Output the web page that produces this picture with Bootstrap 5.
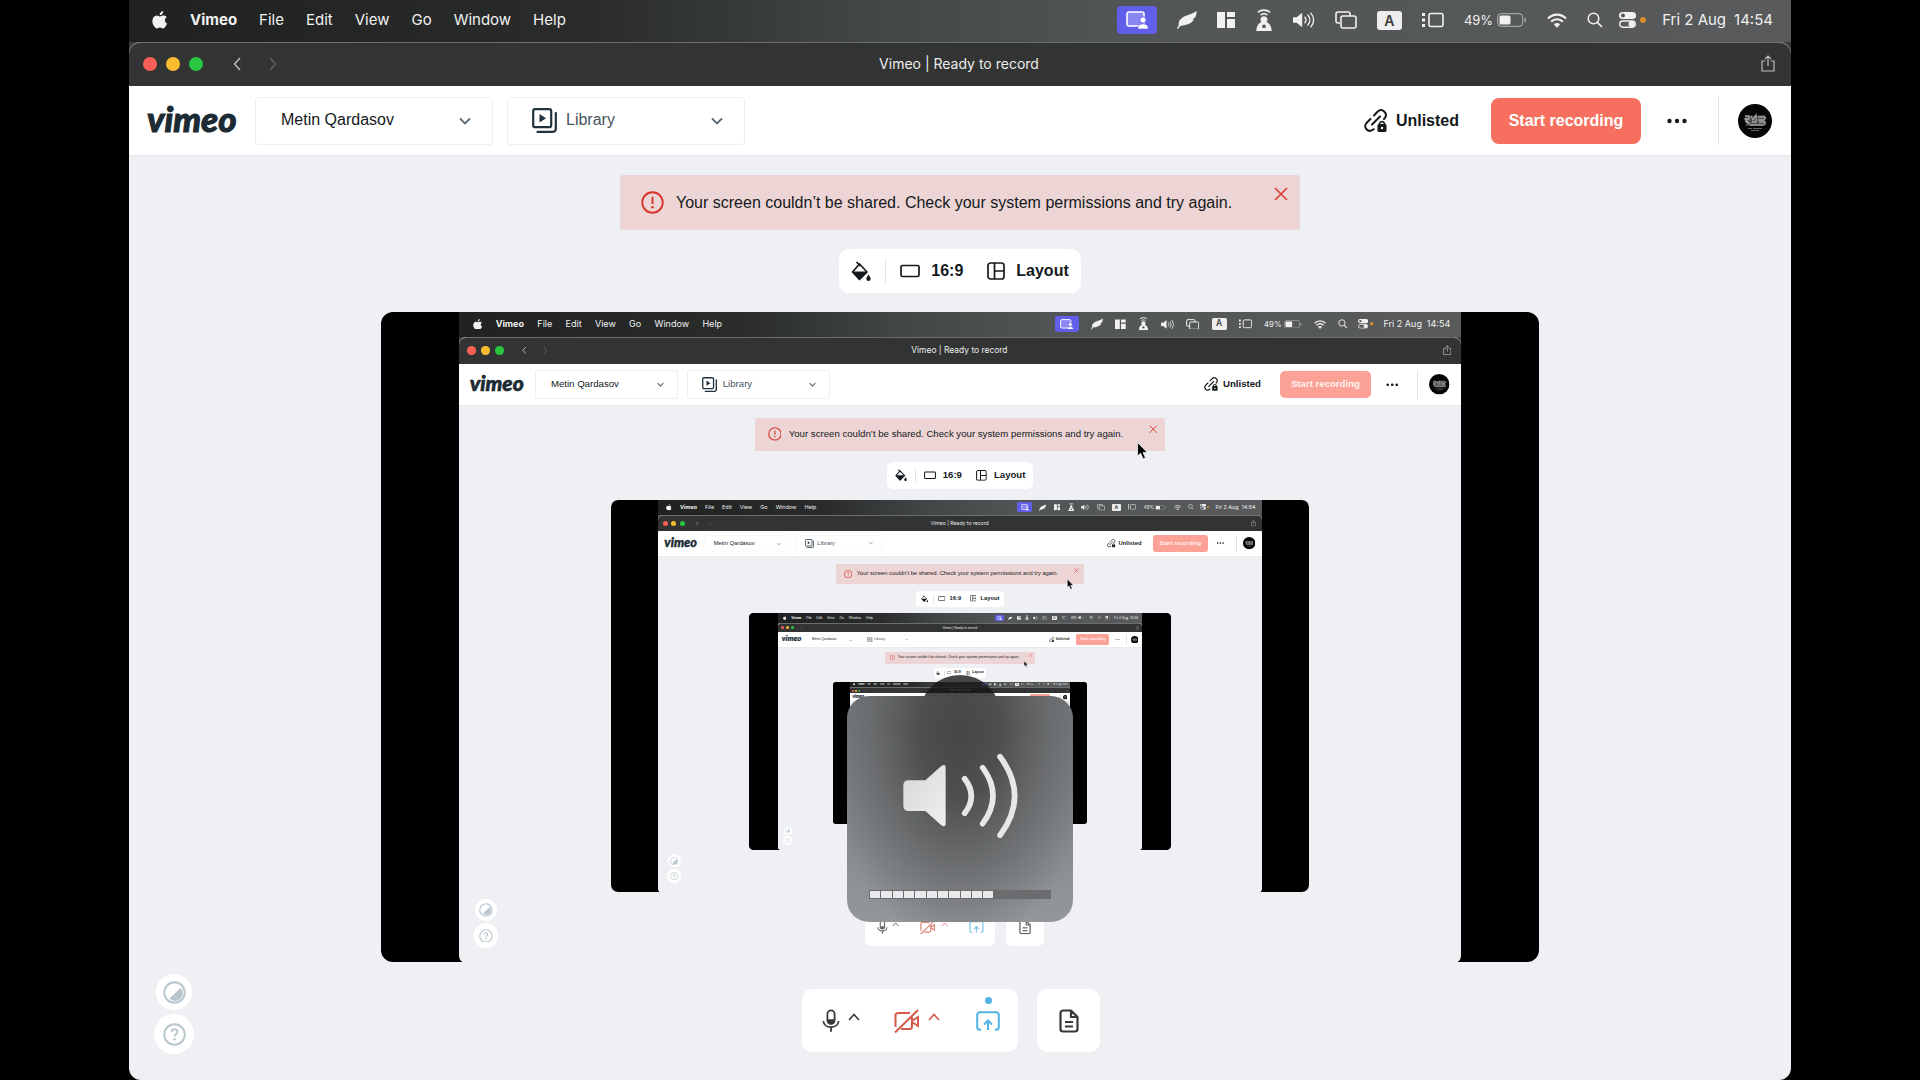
<!DOCTYPE html>
<html lang="en">
<head>
<meta charset="utf-8">
<meta name="viewport" content="width=device-width, initial-scale=1">
<title>Vimeo | Ready to record</title>
<link href="https://cdn.jsdelivr.net/npm/bootstrap@5.3.0/dist/css/bootstrap.min.css" rel="stylesheet">
<style>
  body { background: #000; font-family: "Liberation Sans", Arial, sans-serif; font-size: 16px; color: #14191c; overflow-x: hidden; }
  svg { display: block; flex: none; }
  .desk { position: relative; margin: 0 129px; min-height: 100vh; background: #000; }
  .mac-font { font-family: Inter, sans-serif; font-size: 15px; line-height: 20px; }

  .menubar { height: 42px; padding: 0 18px 2px 23px; color: #f1f1f1; background: linear-gradient(90deg, #202222, #2a2c2c 28%, #434646 44%, #525556 60%, #585a5b); }
  .menubar a { color: inherit; text-decoration: none; }
  .menu-list { gap: 22px; }
  .tray { gap: 20px; }
  .tray-end { gap: 16px; }
  .cast { width: 40px; height: 28px; border-radius: 4px; background: #615eea; }
  .lang-key { width: 25px; height: 19px; border-radius: 3px; background: #eee; color: #3c3e3e; font-size: 14px; line-height: 19px; font-weight: 600; }
  .charge { font-size: 13px; }

  .win { border-radius: 12px; overflow: hidden; background: #eff0f4; }
  .under-win { background: linear-gradient(#3b3d3d 50%, #000 50%); }
  .titlebar { height: 44px; padding: 0 16px 2px 14px; font-size: 14px; background: #323433; color: #ececec; border-top: 1px solid #6c6e6d; border-radius: 12px 12px 0 0; }
  .side { flex: 1 1 0; }
  .lights { gap: 9px; margin-right: 30px; }
  .light { width: 14px; height: 14px; border-radius: 50%; }
  .bare { border: 0; background: none; padding: 0; color: inherit; }

  .topbar { height: 70px; padding: 0 19px 0 18px; background: #fff; border-bottom: 1px solid #e8eaee; }
  .wordmark { font: italic 900 35px/40px Lato, sans-serif; -webkit-text-stroke: 1px #1b2a33; color: #1b2a33; text-decoration: none; width: 92px; padding-bottom: 6px; }
  .pickers { gap: 14px; }
  .picker { width: 238px; height: 48px; border: 1px solid #eeeff1; border-radius: 3px; }
  .desk .desk .desk .picker { border-color: #fafafb; }
  .picker select { width: 100%; height: 46px; padding: 0 38px 2px 25px; border: 0; border-radius: 3px; background-color: transparent; font-size: 16px; color: #14191c;
    background-image: url("data:image/svg+xml,%3Csvg xmlns='http://www.w3.org/2000/svg' viewBox='0 0 12 12'%3E%3Cpath d='M1 3.5l5 5 5-5' fill='none' stroke='%235a6b76' stroke-width='1.8'/%3E%3C/svg%3E");
    background-position: right 21px center; background-size: 12px 12px; }
  .picker svg + select { padding-left: 8px; color: #45545e; }
  .btn-rec { width: 150px; height: 46px; padding: 0; border-radius: 8px; font-size: 16px; font-weight: 700; color: #fff; background: #f76f5f; border: 0; }
  .btn-rec:hover { background: #e9604f; color: #fff; }
  .btn-rec:disabled { background: #fca195; color: #fff2ef; opacity: 1; }
  .rule-v { width: 1px; background: #e2e6e9; }
  .topbar .rule-v { height: 48px; margin: 0 19px 0 29px; }
  .face { width: 34px; height: 34px; }

  .work { position: relative; padding: 19px 0 28px; }
  .notice { width: 680px; height: 55px; margin: 0; padding: 0 12px 0 21px; border: 0; border-radius: 3px; background: #edd5d5; color: #14191c; }
  .notice .bare { color: #dd3a32; margin-top: 12px; }
  .notice span { margin-left: 12px; }
  .framebar { height: 44px; margin: 19px 0; padding: 0 12px; border-radius: 10px; background: #fff; font-weight: 700; }
  .framebar .rule-v { height: 26px; margin: 0 14px; }
  .framebar .bare { gap: 11px; }
  .feed { position: relative; width: 1158px; max-width: 100%; height: 650px; border-radius: 12px; background: #000; overflow: hidden; }
  .feed > .desk { zoom: .603; width: 1662px; height: 1080px; min-height: 0; margin: 0 auto; flex: none; }
  .desk .desk .dock svg { opacity: .75; }
  .dock { margin-top: 27px; gap: 19px; padding-right: 18px; }
  .dock-box { height: 63px; border-radius: 10px; background: #fff; color: #35393c; }
  .dock-main { width: 216px; }
  .dock-doc { width: 63px; }
  .ready { left: 50%; top: -14px; width: 7px; height: 7px; margin-left: -3px; border-radius: 50%; background: #54b4e4; }
  .off { color: #d35a4c; }
  .live { color: #54b4e4; }

  .helpers { position: absolute; left: 25px; bottom: 26px; gap: 4px; color: #b8c6cd; }
  .helpers button { width: 36px; height: 36px; border-radius: 50%; background: #fff; }
  .helpers button + button { width: 40px; height: 40px; }

  .pointer { position: absolute; left: 1124px; top: 216px; }
  .count { position: absolute; left: 50%; bottom: 205px; width: 82px; height: 82px; margin-left: -41px; border-radius: 50%; background: rgba(20, 21, 21, .78); }
  .osd { position: absolute; left: 50%; bottom: 40px; width: 226px; height: 226px; margin-left: -113px; padding: 54px 22px 23px; border-radius: 22px;
    background: radial-gradient(ellipse 60% 95% at 50% 16%, #454746 0, #4e5050 30%, rgba(100,102,104,.75) 65%, rgba(140,142,144,0) 100%), linear-gradient(#75787a, #94979a); }
  .level { height: 9px; padding: 1px; gap: 1px; background: #6a6c6d; }
  .level i { flex: 1 1 0; }
  .level .on { background: #e9eaeb; }
</style>
</head>
<body>

<svg width="0" height="0" class="position-absolute" aria-hidden="true">
  <defs>
    <linearGradient id="shine" x1="0" y1="0" x2="1" y2="1"><stop offset="0" stop-color="#d6d7d8"/><stop offset="1" stop-color="#eeeff0"/></linearGradient>
    <symbol id="apple" viewBox="0 0 16 18"><path fill="currentColor" d="M11.200 0c.1 1.100-.3 2.100-.9 2.900-.7.800-1.600 1.300-2.600 1.200-.1-1 .4-2.100 1-2.700C9.300.6 10.400.1 11.200 0zM14.800 6.200c-1.200.7-1.900 1.700-1.900 3 0 1.500.9 2.700 2.200 3.200-.3.900-.7 1.800-1.300 2.600-.8 1.200-1.600 2.400-2.900 2.400-1.200 0-1.600-.8-3-.8s-1.900.8-3 .8c-1.300 0-2.200-1.300-3-2.400C.3 12.700-.2 9.300 1.200 6.900c.8-1.400 2.100-2.300 3.500-2.300 1.300 0 2.200.8 3.200.8s1.900-.9 3.500-.8c1.400 0 2.600.6 3.400 1.600z"/></symbol>
    <symbol id="cast" viewBox="0 0 22 18"><rect x="1" y="1" width="17" height="14" rx="2" fill="#8a87f3" stroke="#fff" stroke-width="1.6"/><circle cx="17" cy="9" r="3.200" fill="#fff" stroke="#615eea"/><path d="M12 18v-1.500c0-2.500 2.200-3.600 5-3.600s5 1.100 5 3.600V18z" fill="#fff" stroke="#615eea" stroke-width=".6"/></symbol>
    <symbol id="quill" viewBox="0 0 22 20"><path fill="currentColor" d="M21.500 0c.3 4.500-1 7.500-4.200 9.300l1.200.6C16 13 12.500 15 7.800 15.800L3.500 16.500 1.200 20 0 19l2-3.400C1 11 4.500 7.800 9 5.600 13 3.700 17.500 3 21.500 0z"/></symbol>
    <symbol id="tiles" viewBox="0 0 18 18"><path fill="currentColor" d="M0 1h8v16H0zM10 1h8v5h-8zM10 8h8v9h-8z"/></symbol>
    <symbol id="beacon" viewBox="0 0 16 20"><g fill="none" stroke="currentColor" stroke-width="1.500"><path d="M2.500 3C5.500.3 10.500.3 13.500 3M5 5.500c1.800-1.500 4.200-1.500 6 0"/></g><path fill="currentColor" fill-rule="evenodd" d="M8 6.500c2 0 3.200 1.400 3.200 3 0 .9-.4 1.700-1 2.300 2.700.9 4.600 3.700 4.800 8.200H1c.2-4.500 2.100-7.300 4.800-8.200-.6-.6-1-1.400-1-2.300 0-1.600 1.200-3 3.200-3zM8 14a1.700 1.700 0 1 0 0 3.400A1.700 1.700 0 0 0 8 14z"/></symbol>
    <symbol id="sound" viewBox="0 0 24 18"><path fill="currentColor" d="M0 6h4l6-5v16l-6-5H0z"/><path d="M13 6c1.500 1.800 1.500 4.200 0 6M16.200 3.600c2.800 3.200 2.800 7.600 0 10.800M19.500 1.500c4 4.500 4 10.500 0 15" fill="none" stroke="currentColor" stroke-width="1.500" stroke-linecap="round"/></symbol>
    <symbol id="stack" viewBox="0 0 22 18"><g fill="none" stroke="currentColor" stroke-width="1.600"><path d="M5 12H3a2 2 0 0 1-2-2V3a2 2 0 0 1 2-2h10a2 2 0 0 1 2 2v2"/><rect x="6" y="5" width="15" height="12" rx="2"/></g></symbol>
    <symbol id="stage" viewBox="0 0 22 16"><rect x="7" y="1.500" width="14" height="13" rx="2" fill="none" stroke="currentColor" stroke-width="1.600"/><path fill="currentColor" d="M0 1h3v3H0zM0 6.500h3v3H0zM0 12h3v3H0z"/></symbol>
    <symbol id="battery" viewBox="0 0 30 14"><rect x=".7" y=".7" width="25" height="12.600" rx="3.500" fill="none" stroke="currentColor" opacity=".6"/><rect x="2.500" y="2.500" width="11" height="9" rx="1.500" fill="currentColor"/><path d="M27.500 4.500c2 .8 2 4.200 0 5z" fill="currentColor" opacity=".6"/></symbol>
    <symbol id="wifi" viewBox="0 0 20 15"><g fill="none" stroke="currentColor" stroke-width="2.200"><path d="M1 5.500c5-5.300 13-5.300 18 0M4.200 8.800c3.300-3.400 8.300-3.400 11.600 0"/></g><path fill="currentColor" d="M6.800 11.300c1.900-1.700 4.500-1.700 6.400 0L10 14.800z"/></symbol>
    <symbol id="lens" viewBox="0 0 16 16"><circle cx="6.500" cy="6.500" r="5.300" fill="none" stroke="currentColor" stroke-width="1.500"/><path d="M10.500 10.500L15 15" stroke="currentColor" stroke-width="1.700"/></symbol>
    <symbol id="center" viewBox="0 0 17 16"><rect width="17" height="7" rx="3.500" fill="currentColor"/><circle cx="4" cy="3.500" r="2" fill="#555"/><rect x=".7" y="9" width="15.600" height="6.200" rx="3.100" fill="none" stroke="currentColor" stroke-width="1.400"/><circle cx="12.500" cy="12" r="3" fill="currentColor"/></symbol>
    <symbol id="back" viewBox="0 0 8 14"><path d="M7 1L1.500 7 7 13" fill="none" stroke="currentColor" stroke-width="1.500"/></symbol>
    <symbol id="fwd" viewBox="0 0 8 14"><path d="M1 1l5.500 6L1 13" fill="none" stroke="currentColor" stroke-width="1.500"/></symbol>
    <symbol id="upload" viewBox="0 0 14 17"><path d="M4.500 6H1v10h12V6H9.500M7 11V1.500M4 4l3-3 3 3" fill="none" stroke="currentColor" stroke-width="1.200"/></symbol>
    <symbol id="library" viewBox="0 0 26 26"><g fill="none" stroke="#22323c" stroke-width="2.200"><rect x="1.200" y="1.200" width="18" height="18" rx="2"/><path d="M23.800 5v15.800a3 3 0 0 1-3 3H5.500" stroke-linecap="round"/></g><path d="M7.500 6v8.500l6.500-4.200z" fill="#22323c"/></symbol>
    <symbol id="link" viewBox="0 0 24 24"><g fill="none" stroke="currentColor" stroke-width="2" stroke-linecap="round"><path d="M10 6.500l3.500-3.700c4.800-4.500 10.500 1.500 7.500 6l-1 1.200M6.500 10l-4 4c-3.500 4.500 1.500 9.800 6 7l1.300-.8M8 15.500L16 7.500"/></g><path d="M15.500 15.500v-1a2.600 2.600 0 0 1 5 0v1" fill="none" stroke="currentColor" stroke-width="1.700"/><rect x="13.500" y="15" width="9" height="8" rx="1.500" fill="currentColor"/><circle cx="18" cy="19" r="1.200" fill="#fff"/></symbol>
    <symbol id="dots" viewBox="0 0 20 6"><g fill="currentColor"><circle cx="2.500" cy="3" r="2.200"/><circle cx="10" cy="3" r="2.200"/><circle cx="17.500" cy="3" r="2.200"/></g></symbol>
    <symbol id="face" viewBox="0 0 34 34"><circle cx="17" cy="17" r="17" fill="#050505"/><path d="M7 12l20-1v10l-19 1z" fill="#4a4a4a"/><g stroke="#a4a4a4" fill="none"><path d="M7 12h4v3H7l4 4M13 12l2 4 3-5v6M20 13h7M20 16h6l2-3M7 17l5 3M12 21h14M14 18h5M21 18h6v3" stroke-width="1.300"/><path d="M10 24.500h4M15 24.500h9M13 26.500h8" stroke="#666" stroke-width="1"/></g></symbol>
    <symbol id="alert" viewBox="0 0 24 24"><circle cx="12" cy="12" r="10.700" fill="none" stroke="currentColor" stroke-width="2"/><path d="M12 6v7.500" stroke="currentColor" stroke-width="2"/><circle cx="12" cy="17" r="1.300" fill="currentColor"/></symbol>
    <symbol id="close" viewBox="0 0 14 14"><path d="M1 1l12 12M13 1L1 13" stroke="currentColor" stroke-width="1.600"/></symbol>
    <symbol id="bucket" viewBox="0 0 20 20"><path d="M8.500 3L1.500 11l7 7.500 7.500-7.500z" fill="none" stroke="currentColor" stroke-width="1.700" stroke-linejoin="round"/><path d="M1.500 10.500h14.500l-7.500 8z" fill="currentColor"/><path d="M5.500 1l4 4" stroke="currentColor" stroke-width="1.700"/><path d="M17.500 13.500c1.500 2.300 2.200 3.300 2.200 4.300a2.200 2.200 0 0 1-4.400 0c0-1 .7-2 2.200-4.300z" fill="currentColor"/></symbol>
    <symbol id="ratio" viewBox="0 0 20 14"><rect x="1" y="1.500" width="18" height="11" rx="1.500" fill="none" stroke="currentColor" stroke-width="1.700"/></symbol>
    <symbol id="layout" viewBox="0 0 18 18"><g fill="none" stroke="currentColor" stroke-width="1.700"><rect x="1" y="1" width="16" height="16" rx="2.500"/><path d="M7.500 1v16M7.500 9H17"/></g></symbol>
    <symbol id="mic" viewBox="0 0 20 26"><rect x="6" y="1.200" width="8" height="15" rx="4" fill="none" stroke="currentColor" stroke-width="2"/><path d="M6 11h8v1.500a4 4 0 0 1-8 0z" fill="currentColor"/><path d="M1.500 13c.6 9 16.400 9 17 0M10 20v5" fill="none" stroke="currentColor" stroke-width="2"/></symbol>
    <symbol id="up" viewBox="0 0 12 8"><path d="M1 7l5-5.500L11 7" fill="none" stroke="currentColor" stroke-width="1.600"/></symbol>
    <symbol id="nocam" viewBox="0 0 26 24"><g fill="none" stroke="currentColor" stroke-width="2"><path d="M16 4H4a2.500 2.500 0 0 0-2.500 2.500V18M7 20h8.500a2.500 2.500 0 0 0 2.500-2.500V8M18 12l6-4v9l-6-4M1 23.500L24 1"/></g></symbol>
    <symbol id="present" viewBox="0 0 24 20"><path d="M5 18.800H4A2.800 2.800 0 0 1 1.200 16V4A2.800 2.800 0 0 1 4 1.200h16A2.800 2.800 0 0 1 22.800 4v12a2.800 2.800 0 0 1-2.800 2.800h-1M12 19V10M8 13.500l4-4 4 4" fill="none" stroke="currentColor" stroke-width="2"/></symbol>
    <symbol id="notes" viewBox="0 0 20 24"><path d="M12 1.500H4A2.500 2.500 0 0 0 1.500 4v16A2.500 2.500 0 0 0 4 22.500h12a2.500 2.500 0 0 0 2.500-2.500V8zM12 1.500V8h6.500M6 13h8M6 17.500h8" fill="none" stroke="currentColor" stroke-width="2.200" stroke-linejoin="round"/></symbol>
    <symbol id="contrast" viewBox="0 0 24 24"><circle cx="12" cy="12" r="10.700" fill="none" stroke="currentColor" stroke-width="2"/><path d="M18.500 7a8 8 0 0 1-11.800 11.300z" fill="currentColor"/></symbol>
    <symbol id="ask" viewBox="0 0 24 24"><circle cx="12" cy="12" r="10.700" fill="none" stroke="currentColor" stroke-width="2"/><path d="M9 9.500c0-4 6-4 6 0 0 2.300-3 2.200-3 4.700" fill="none" stroke="currentColor" stroke-width="2"/><circle cx="12" cy="17" r="1.300" fill="currentColor"/></symbol>
  </defs>
</svg>

<div class="desk d-flex flex-column">
  <header class="menubar mac-font d-flex align-items-center justify-content-between">
    <nav class="menu-list d-flex align-items-center" aria-label="Menu bar">
      <a href="#" aria-label="Apple"><svg width="16" height="18"><use href="#apple"/></svg></a>
      <a href="#" class="fw-bold">Vimeo</a><a href="#">File</a><a href="#">Edit</a><a href="#">View</a><a href="#">Go</a><a href="#">Window</a><a href="#">Help</a>
    </nav>
    <div class="tray d-flex align-items-center">
      <span class="cast d-flex align-items-center justify-content-center"><svg width="22" height="18"><use href="#cast"/></svg></span>
      <svg width="20" height="20"><use href="#quill"/></svg>
      <svg width="18" height="18"><use href="#tiles"/></svg>
      <svg width="18" height="22"><use href="#beacon"/></svg>
      <svg width="22" height="18"><use href="#sound"/></svg>
      <svg width="22" height="18"><use href="#stack"/></svg>
      <span class="lang-key text-center">A</span>
      <svg width="22" height="16"><use href="#stage"/></svg>
      <span class="d-flex align-items-center gap-1"><span class="charge">49%</span><svg width="30" height="14"><use href="#battery"/></svg></span>
      <svg width="20" height="15"><use href="#wifi"/></svg>
      <div class="tray-end d-flex align-items-center">
        <svg width="16" height="16"><use href="#lens"/></svg>
        <span class="d-flex align-items-center gap-1"><svg width="17" height="16"><use href="#center"/></svg><svg width="6" height="6"><circle cx="3" cy="3" r="3" fill="#d98c2e"/></svg></span>
        <span class="d-flex gap-2 text-nowrap"><span>Fri 2 Aug</span><span>14:54</span></span>
      </div>
    </div>
  </header>

  <div class="under-win d-flex flex-column flex-grow-1">
  <div class="win d-flex flex-column flex-grow-1">
    <div class="titlebar mac-font d-flex align-items-center">
      <div class="side d-flex align-items-center">
        <div class="lights d-flex"><span class="light" style="background:#f95f57"></span><span class="light" style="background:#fbbb2e"></span><span class="light" style="background:#29c640"></span></div>
        <button class="bare opacity-75" type="button" aria-label="Back"><svg width="8" height="14"><use href="#back"/></svg></button>
        <button class="bare ms-4 ps-1 opacity-25" type="button" aria-label="Forward"><svg width="8" height="14"><use href="#fwd"/></svg></button>
      </div>
      <span>Vimeo | Ready to record</span>
      <div class="side d-flex justify-content-end">
        <button class="bare opacity-75" type="button" aria-label="Share"><svg width="14" height="17"><use href="#upload"/></svg></button>
      </div>
    </div>

    <div class="topbar d-flex align-items-center justify-content-between">
      <div class="d-flex align-items-center">
        <a href="#" class="wordmark">vimeo</a>
        <div class="pickers d-flex ms-3">
          <div class="picker"><select class="form-select" aria-label="Account"><option>Metin Qardasov</option></select></div>
          <div class="picker d-flex align-items-center ps-4"><svg width="26" height="26"><use href="#library"/></svg><select class="form-select" aria-label="Folder"><option>Library</option></select></div>
        </div>
      </div>
      <div class="d-flex align-items-center">
        <button class="bare d-flex align-items-center fw-bold me-4" type="button"><svg width="24" height="24" class="me-2"><use href="#link"/></svg>Unlisted</button>
        <button class="btn btn-rec ms-2" type="button">Start recording</button>
        <button class="bare ms-4" type="button" aria-label="More"><svg width="24" height="6"><use href="#dots"/></svg></button>
        <span class="rule-v"></span>
        <button class="bare" type="button" aria-label="Profile"><svg class="face"><use href="#face"/></svg></button>
      </div>
    </div>

    <main class="work d-flex flex-column align-items-center flex-grow-1">
      <div class="notice alert d-flex align-items-center" role="alert">
        <svg width="23" height="23" style="color:#d7372f"><use href="#alert"/></svg>
        <span class="me-auto text-nowrap">Your screen couldn’t be shared. Check your system permissions and try again.</span>
        <button class="bare align-self-start" type="button" aria-label="Dismiss"><svg width="14" height="14"><use href="#close"/></svg></button>
      </div>

      <div class="framebar d-flex align-items-center">
        <button class="bare" type="button" aria-label="Background"><svg width="20" height="20"><use href="#bucket"/></svg></button>
        <span class="rule-v"></span>
        <button class="bare d-flex align-items-center fw-bold" type="button"><svg width="20" height="14"><use href="#ratio"/></svg>16:9</button>
        <button class="bare d-flex align-items-center fw-bold ms-4" type="button"><svg width="18" height="18"><use href="#layout"/></svg>Layout</button>
      </div>

      <div class="feed d-flex">
        <div class="count"></div>
        <div class="osd d-flex flex-column align-items-center justify-content-between">
          <svg width="120" height="90" viewBox="480 450 360 270" role="img" aria-label="Volume">
            <path d="M490 557q0-16 16-16h50l48-43q13-8 13 6v166q0 14-13 6l-48-43h-50q-16 0-16-16z" fill="url(#shine)"/>
            <path d="M674 536q40 52 0 104M728 503q62 84 0 168M780 470q88 118 0 236" fill="none" stroke="#e6e7e8" stroke-width="17" stroke-linecap="round"/>
          </svg>
          <div class="level d-flex w-100" role="meter" aria-label="Volume" aria-valuemin="0" aria-valuemax="16" aria-valuenow="11"><i class="on"></i><i class="on"></i><i class="on"></i><i class="on"></i><i class="on"></i><i class="on"></i><i class="on"></i><i class="on"></i><i class="on"></i><i class="on"></i><i class="on"></i><i></i><i></i><i></i><i></i><i></i></div>
        </div>
      </div>

      <div class="dock d-flex">
        <div class="dock-box dock-main d-flex align-items-center justify-content-between ps-3 pe-3">
          <div class="d-flex align-items-center gap-2 ms-1">
            <button class="bare" type="button" aria-label="Microphone"><svg width="18" height="24"><use href="#mic"/></svg></button>
            <button class="bare pb-2" type="button" aria-label="Microphone options"><svg width="12" height="8"><use href="#up"/></svg></button>
          </div>
          <div class="off d-flex align-items-center gap-1">
            <button class="bare" type="button" aria-label="Camera off"><svg width="26" height="24"><use href="#nocam"/></svg></button>
            <button class="bare pb-2 ps-1" type="button" aria-label="Camera options"><svg width="12" height="8"><use href="#up"/></svg></button>
          </div>
          <button class="bare live position-relative" type="button" aria-label="Share screen"><span class="ready position-absolute"></span><svg width="28" height="20"><use href="#present"/></svg></button>
        </div>
        <button class="bare dock-box dock-doc d-flex align-items-center justify-content-center" type="button" aria-label="Notes"><svg width="20" height="24"><use href="#notes"/></svg></button>
      </div>

      <div class="helpers d-flex flex-column align-items-center">
        <button class="bare d-flex align-items-center justify-content-center" type="button" aria-label="Theme"><svg width="23" height="23"><use href="#contrast"/></svg></button>
        <button class="bare d-flex align-items-center justify-content-center" type="button" aria-label="Help"><svg width="23" height="23"><use href="#ask"/></svg></button>
      </div>
    </main>
  </div>
  </div>
</div>

<template>
  <svg class="pointer" width="18" height="30" viewBox="0 0 18 30"><path d="M1 1v22l5-4.500 4 9.500 4-1.700-4-9h7z" fill="#000" stroke="#fff" stroke-width="1.200"/></svg>
</template>

<script src="https://cdn.jsdelivr.net/npm/bootstrap@5.3.0/dist/js/bootstrap.bundle.min.js"></script>
<script>
  // The live preview shows the shared desktop, which again shows the preview.
  const desk = document.querySelector('.desk');
  const shot = desk.cloneNode(true);
  shot.querySelector('.feed').replaceChildren();
  shot.querySelector('.btn-rec').disabled = true;
  shot.append(document.querySelector('template').content.cloneNode(true));
  shot.inert = true;
  shot.setAttribute('aria-hidden', 'true');
  let inner = null;
  for (let depth = 0; depth < 4; depth++) {
    const copy = shot.cloneNode(true);
    if (inner) copy.querySelector('.feed').append(inner);
    inner = copy;
  }
  desk.querySelector('.feed').prepend(inner);
</script>
</body>
</html>
